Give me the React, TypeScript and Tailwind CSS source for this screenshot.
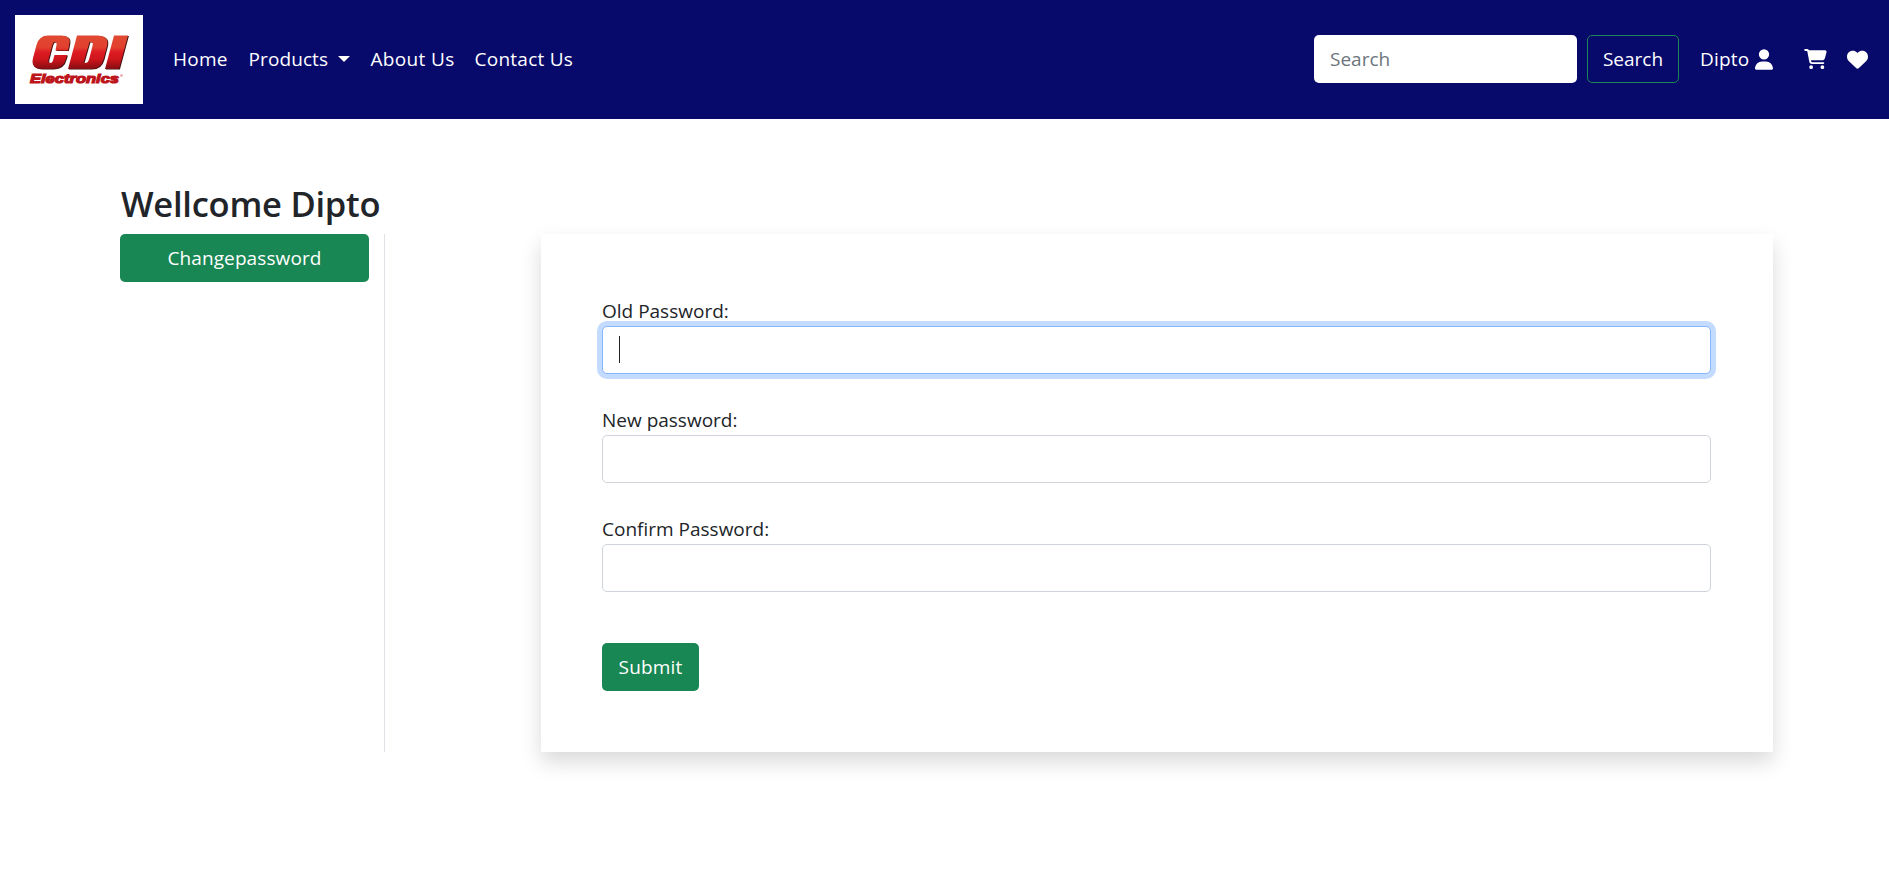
import React from "react";

const pageFont = "font-['Open_Sans','Noto_Sans',sans-serif]";

function Logo() {
  return (
    <svg className="block h-[89px] w-[128px] bg-white" viewBox="0 0 128 89" role="img" aria-label="CDI Electronics">
      <defs>
        <linearGradient id="red" x1="0" y1="0" x2="0" y2="1">
          <stop offset="0" stopColor="#e04a32" />
          <stop offset="0.35" stopColor="#e2402f" />
          <stop offset="0.5" stopColor="#dc1b22" />
          <stop offset="0.7" stopColor="#cf161c" />
          <stop offset="1" stopColor="#850d12" />
        </linearGradient>
        <linearGradient id="gloss" x1="0" y1="0" x2="1" y2="0">
          <stop offset="0" stopColor="#fff" stopOpacity="0.5" />
          <stop offset="1" stopColor="#fff" stopOpacity="0.05" />
        </linearGradient>
        <g id="mark">
          <path d="M33 20.500H46Q56 20.500 54.500 28L53 35.500H40.500L41.500 30Q42 27 40 27Q38 27 37.300 30L33.500 44.500Q32.800 48 35 48Q37.500 48 38.300 44.500L39.500 40H52L51 43.500Q48.500 54 38 54H27Q15.500 54 18 43L21.500 30Q24 20.500 33 20.500Z" />
          <path fillRule="evenodd" d="M62 20.500H82Q94.500 20.500 92 31L88.500 44.500Q86 54 76 54H53ZM74.500 27L68.500 48H70Q73 48 74 44.500L77.500 31Q78.500 27 76 27Z" />
          <path d="M99 20.500H113L104 54H90Z" />
        </g>
        <clipPath id="markClip"><use href="#mark" /></clipPath>
      </defs>
      <use href="#mark" x="0.900" y="0.600" fill="#3d1010" />
      <use href="#mark" fill="url(#red)" />
      <path d="M15 38Q20 35 36 34Q43 27 57 25V20H15ZM55 39Q68 35 73 31Q81 26 96 26V20H58ZM91 39Q98 30 115 28V20H96Z" fill="url(#gloss)" clipPath="url(#markClip)" />
      <text x="15" y="67.700" textLength="89" lengthAdjust="spacingAndGlyphs" fontSize="13.500" className="font-['Liberation_Sans',sans-serif] font-bold italic" fill="#bd151b" stroke="#bd151b" strokeWidth="1.200">Electronics</text>
      <circle cx="106.500" cy="60.500" r="1.300" fill="#e8a0a3" />
    </svg>
  );
}

function UserIcon() {
  return (
    <svg className="h-[21px] w-[18px]" viewBox="0 0 448 512" fill="white">
      <path d="M224 256A128 128 0 1 0 224 0a128 128 0 1 0 0 256zm-45.700 48C79.800 304 0 383.800 0 482.300C0 498.700 13.300 512 29.700 512H418.300c16.400 0 29.700-13.300 29.700-29.700C448 383.800 368.200 304 269.700 304H178.300z" />
    </svg>
  );
}

function CartIcon() {
  return (
    <svg className="h-5 w-[23px]" viewBox="0 0 576 512" fill="white">
      <path d="M0 24C0 10.700 10.700 0 24 0H69.500c22 0 41.500 12.800 50.600 32h411c26.300 0 45.500 25 38.600 50.400l-41 152.300c-8.500 31.400-37 53.300-69.500 53.300H170.700l5.400 28.500c2.200 11.300 12.100 19.500 23.600 19.500H488c13.300 0 24 10.700 24 24s-10.700 24-24 24H199.700c-34.600 0-64.300-24.600-70.700-58.500L77.400 54.500c-.7-3.800-4-6.500-7.900-6.500H24C10.700 48 0 37.300 0 24zM128 464a48 48 0 1 1 96 0 48 48 0 1 1-96 0zm336-48a48 48 0 1 1 0 96 48 48 0 1 1 0-96z" />
    </svg>
  );
}

function HeartIcon() {
  return (
    <svg className="h-[21px] w-[21px]" viewBox="0 0 512 512" fill="white">
      <path d="M47.600 300.400L228.300 469.100c7.500 7 17.400 10.900 27.700 10.900s20.200-3.900 27.700-10.900L464.400 300.400c30.400-28.300 47.600-68 47.600-109.500v-5.800c0-69.900-50.500-129.500-119.400-141C347 36.500 300.600 51.400 268 84L256 96 244 84c-32.600-32.600-79-47.500-124.600-39.900C50.500 55.600 0 115.200 0 185.100v5.800c0 41.500 17.200 81.200 47.600 109.500z" />
    </svg>
  );
}

function Field({ label, focused = false }: { label: string; focused?: boolean }) {
  return (
    <div className="mb-[31.400px]">
      <label className="block h-[30px] leading-[31px] whitespace-nowrap">{label}</label>
      <div
        className={
          focused
            ? "flex h-[48px] items-center rounded-[5px] border border-[#86b7fe] bg-white px-[16px] shadow-[0_0_0_5px_rgba(13,110,253,0.25)]"
            : "flex h-[48px] items-center rounded-[5px] border border-[#ced4da] bg-white px-[16px]"
        }
      >
        {focused && <span className="h-[27px] w-px bg-[#212529]" />}
      </div>
    </div>
  );
}

export default function App() {
  return (
    <div className={`${pageFont} min-h-[870px] w-full overflow-hidden bg-white text-[19px] text-[#212529]`}>
      <header className="flex h-[119px] items-center bg-[#07096b] pr-[21px] pb-px pl-[15px] text-white">
        <Logo />
        <nav className="ml-[30px] flex items-center pt-px whitespace-nowrap">
          <a className="w-[75.500px] tracking-[0.250px]">Home</a>
          <a className="flex w-[122px] items-center">
            <span className="w-[89.500px] tracking-[0.100px]">Products</span>
            <span className="mb-px h-0 w-0 border-x-[6px] border-t-[6px] border-x-transparent border-t-white" />
          </a>
          <a className="w-[104px] tracking-[0.350px]">About Us</a>
          <a className="tracking-[0.250px]">Contact Us</a>
        </nav>
        <div className="ml-auto flex items-center whitespace-nowrap">
          <div className="flex h-[48px] w-[263px] items-center rounded-[5px] bg-white px-[16px] pt-px text-[#6c757d]">Search</div>
          <button className="ml-[10px] h-[48px] w-[92px] rounded-[5px] border border-[#198754] pt-px">Search</button>
          <span className="ml-[21px] w-[55px] pt-px tracking-[0.200px]">Dipto</span>
          <UserIcon />
          <span className="ml-[31px]"><CartIcon /></span>
          <span className="ml-[20px]"><HeartIcon /></span>
        </div>
      </header>
      <main className="pt-[64px] pl-[120px]">
        <h3 className="h-[51px] pl-px text-[34.500px] leading-[42px] font-[550] tracking-[-0.250px] whitespace-nowrap">Wellcome Dipto</h3>
        <div className="flex h-[517.500px]">
          <aside className="w-[265px] border-r border-[#dee2e6]">
            <button className="h-[47.500px] w-[249px] rounded-[5px] bg-[#198754] pt-px tracking-[0.100px] text-white">Changepassword</button>
          </aside>
          <section className="ml-[156px] w-[1232px] pt-[61.600px] pr-[62px] pl-[61px] shadow-[0_10px_20px_rgba(0,0,0,0.15)]">
            <Field label="Old Password:" focused />
            <Field label="New password:" />
            <Field label="Confirm Password:" />
            <button className="mt-[19px] h-[48px] w-[97px] rounded-[5px] bg-[#198754] pt-px tracking-[0.150px] text-white">Submit</button>
          </section>
        </div>
      </main>
    </div>
  );
}
